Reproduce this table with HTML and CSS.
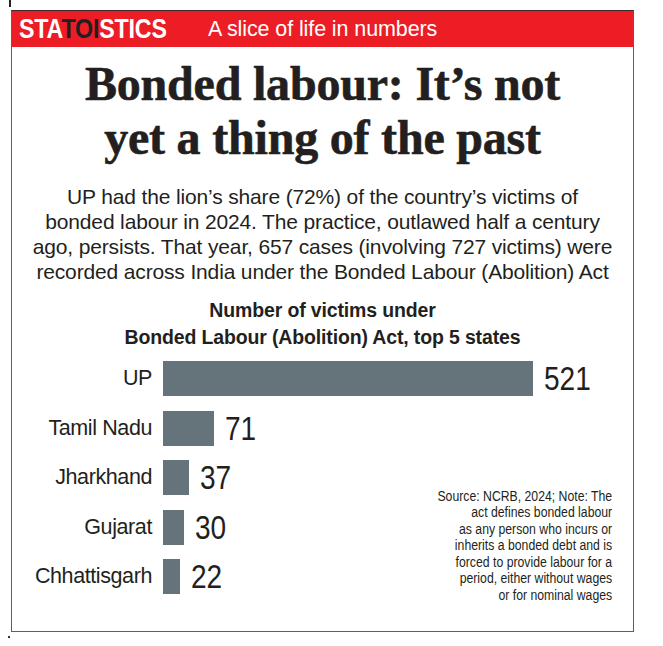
FILE: index.html
```html
<!DOCTYPE html>
<html lang="en">
<head>
<meta charset="utf-8">
<title>Statoistics: Bonded labour</title>
<link rel="stylesheet" href="styles.css">
</head>
<body>
<span class="scan-mark"></span>
<div class="card">
  <header class="masthead">
    <span class="brand">STA<span class="toi">TOI</span>STICS</span>
    <span class="tagline">A slice of life in numbers</span>
  </header>
  <h1 class="headline">Bonded labour: It’s not<br>yet a thing of the past</h1>
  <p class="intro">UP had the lion’s share (72%) of the country’s victims of<br>bonded labour in 2024. The practice, outlawed half a century<br>ago, persists. That year, 657 cases (involving 727 victims) were<br>recorded across India under the Bonded Labour (Abolition) Act</p>
  <h2 class="chart-title">Number of victims under<br>Bonded Labour (Abolition) Act, top 5 states</h2>
  <div class="chart">
    <div class="label row1">UP</div>
    <div class="bar-cell row1"><span class="bar" style="width:370px"></span><span class="value">521</span></div>
    <div class="label row2">Tamil Nadu</div>
    <div class="bar-cell row2"><span class="bar" style="width:51px"></span><span class="value">71</span></div>
    <div class="label row3">Jharkhand</div>
    <div class="bar-cell row3"><span class="bar" style="width:26px"></span><span class="value">37</span></div>
    <div class="label row4">Gujarat</div>
    <div class="bar-cell row4"><span class="bar" style="width:21px"></span><span class="value">30</span></div>
    <div class="label row5">Chhattisgarh</div>
    <div class="bar-cell row5"><span class="bar" style="width:17px"></span><span class="value">22</span></div>
    <p class="note">Source: NCRB, 2024; Note: The<br>act defines bonded labour<br>as any person who incurs or<br>inherits a bonded debt and is<br>forced to provide labour for a<br>period, either without wages<br>or for nominal wages</p>
  </div>
</div>
<span class="scan-dot"></span>
</body>
</html>
```
FILE: styles.css
```css
html, body {
  margin: 0;
  padding: 0;
  background: #ffffff;
}
body {
  position: relative;
  width: 663px;
  height: 646px;
  font-family: "Liberation Sans", Arial, sans-serif;
  color: #231f20;
}
.scan-mark {
  position: absolute;
  left: 9px;
  top: 0;
  width: 2px;
  height: 7px;
  background: #222;
}
.scan-dot {
  position: absolute;
  left: 8px;
  top: 636px;
  width: 2px;
  height: 2px;
  background: #333;
}
.card {
  margin: 10px 0 0 11px;
  width: 621px;
  height: 620px;
  border: 1px solid #5f5f5f;
  border-top-color: #3a2a2a;
  display: flex;
  flex-direction: column;
}
.masthead {
  height: 36px;
  background: #ec1d25;
  display: flex;
  align-items: center;
  padding-left: 7px;
}
.brand {
  display: inline-block;
  font-weight: 700;
  font-size: 27px;
  letter-spacing: -0.2px;
  color: #ffffff;
  width: 189px;
  line-height: 36px;
  white-space: nowrap;
  transform: scaleX(0.86);
  transform-origin: left center;
}
.brand .toi {
  color: #231f20;
}
.tagline {
  font-size: 21.5px;
  color: #ffffff;
  line-height: 36px;
  letter-spacing: -0.1px;
}
.headline {
  margin: 10px 0 0;
  font-family: "Liberation Serif", "Times New Roman", serif;
  font-weight: 700;
  font-size: 48px;
  line-height: 54px;
  text-align: center;
  letter-spacing: -0.2px;
  -webkit-text-stroke: 0.6px #231f20;
}
.intro {
  margin: 19px 0 0;
  font-size: 21px;
  line-height: 25px;
  text-align: center;
  letter-spacing: -0.15px;
}
.chart-title {
  margin: 13px 0 0;
  font-size: 19.5px;
  font-weight: 700;
  line-height: 27px;
  text-align: center;
  letter-spacing: -0.15px;
}
.chart {
  margin-top: 10px;
  display: grid;
  grid-template-columns: 140px 1fr;
  grid-template-rows: repeat(5, 35px);
  column-gap: 11px;
  row-gap: 14.5px;
}
.label {
  grid-column: 1;
  justify-self: end;
  align-self: center;
  font-size: 21.5px;
  line-height: 25px;
  letter-spacing: -0.4px;
}
.bar-cell {
  grid-column: 2;
  display: flex;
  align-items: center;
  gap: 11px;
}
.bar {
  display: block;
  height: 35px;
  background: #65747a;
}
.value {
  display: inline-block;
  font-size: 33px;
  line-height: 35px;
  transform: scaleX(0.85);
  transform-origin: left center;
}
.row1 { grid-row: 1; }
.row2 { grid-row: 2; }
.row3 { grid-row: 3; }
.row4 { grid-row: 4; }
.row5 { grid-row: 5; }
.note {
  grid-column: 2;
  grid-row: 3 / 6;
  justify-self: end;
  align-self: end;
  margin: 0 21px -9px 0;
  font-size: 15.5px;
  line-height: 16.5px;
  text-align: right;
  white-space: nowrap;
  transform: scaleX(0.79);
  transform-origin: right bottom;
}
```
